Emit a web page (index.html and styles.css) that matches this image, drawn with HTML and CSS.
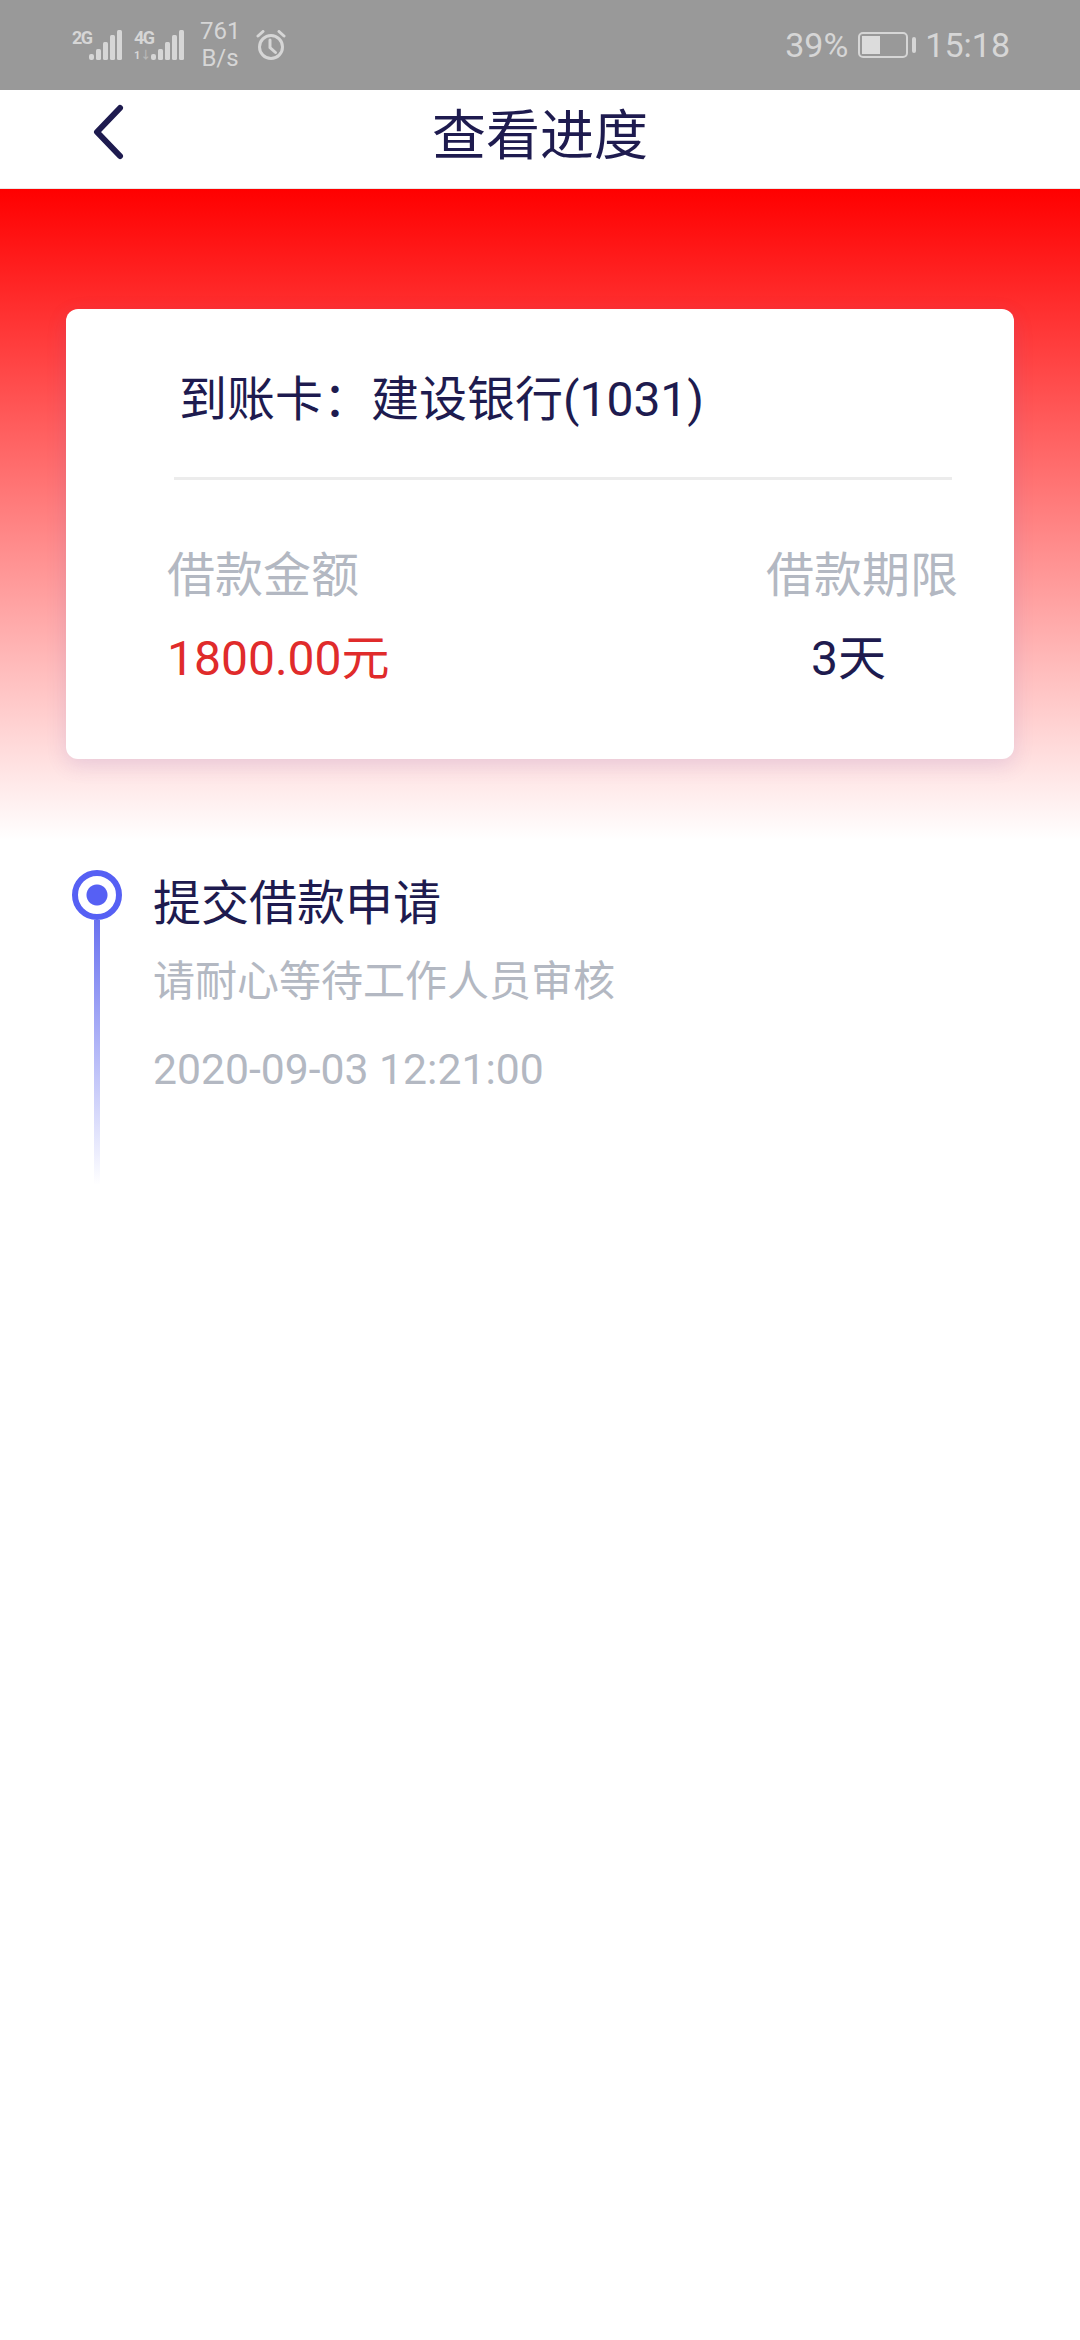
FILE: index.html
```html
<!DOCTYPE html>
<html lang="zh">
<head>
    <meta charset="utf-8">
    <title>查看进度</title>
    <link rel="stylesheet" href="styles.css">
</head>
<body>
    <header class="status-bar">
        <div class="status-left">
            <div class="signal">
                <span class="net-label">2G</span>
                <svg class="bars" width="33" height="30" viewBox="0 0 33 30"><g fill="#d6d6d6"><rect x="0" y="24" width="5" height="6" rx="2"/><rect x="7" y="19" width="5" height="11" rx="1.5"/><rect x="14" y="12" width="5" height="18" rx="1.5"/><rect x="21" y="5" width="5" height="25" rx="1.5"/><rect x="28" y="0" width="5" height="30" rx="1.5"/></g></svg>
            </div>
            <div class="signal">
                <span class="net-label">4G<small>1<i>↓</i></small></span>
                <svg class="bars" width="33" height="30" viewBox="0 0 33 30"><g fill="#d6d6d6"><rect x="0" y="24" width="5" height="6" rx="2"/><rect x="7" y="19" width="5" height="11" rx="1.5"/><rect x="14" y="12" width="5" height="18" rx="1.5"/><rect x="21" y="5" width="5" height="25" rx="1.5"/><rect x="28" y="0" width="5" height="30" rx="1.5"/></g></svg>
            </div>
            <div class="speed">761<br>B/s</div>
            <svg class="alarm" width="30" height="30" viewBox="0 0 30 30" fill="none" stroke="#d6d6d6" stroke-width="3" stroke-linecap="round"><circle cx="15" cy="17" r="11.5"/><path d="M14 10v7.5l5.5 5"/><path d="M2 6l5-4.5M28 6l-5-4.5"/></svg>
        </div>
        <div class="status-right">
            <span>39%</span>
            <div class="battery"><div class="battery-level"></div></div>
            <div class="battery-tip"></div>
            <span>15:18</span>
        </div>
    </header>

    <nav class="nav-bar">
        <svg class="back" width="34" height="58" viewBox="0 0 34 58" fill="none" stroke="#1e1b4f" stroke-width="6" stroke-linecap="round" stroke-linejoin="round"><path d="M29 5L6 29l23 24"/></svg>
        <h1>查看进度</h1>
    </nav>

    <section class="banner">
        <div class="card">
            <div class="card-bank">到账卡：建设银行(1031)</div>
            <hr class="card-line">
            <div class="card-info">
                <div class="info-col">
                    <span class="info-label">借款金额</span>
                    <span class="info-money">1800.00元</span>
                </div>
                <div class="info-col info-col-center">
                    <span class="info-label">借款期限</span>
                    <span class="info-days">3天</span>
                </div>
            </div>
        </div>
    </section>

    <section class="progress">
        <div class="step">
            <div class="step-mark">
                <div class="step-dot"></div>
                <div class="step-line"></div>
            </div>
            <div class="step-text">
                <div class="step-title">提交借款申请</div>
                <div class="step-desc">请耐心等待工作人员审核</div>
                <div class="step-time">2020-09-03 12:21:00</div>
            </div>
        </div>
    </section>
</body>
</html>
```

FILE: styles.css
```css
* {
    box-sizing: border-box;
}

body {
    margin: 0;
    width: 1080px;
    height: 2340px;
    overflow: hidden;
    background-color: white;
    font-family: Roboto, "Noto Sans CJK SC", sans-serif;
    color: #1e1b4f;
}

.status-bar {
    display: flex;
    justify-content: space-between;
    align-items: center;
    height: 90px;
    padding: 0 70px 0 72px;
    background-color: #999999;
    color: #d6d6d6;
}

.status-left {
    display: flex;
    align-items: center;
}

.signal {
    display: flex;
    align-items: flex-end;
    margin-right: 12px;
}

.signal:nth-child(2) {
    margin-right: 16px;
}

.net-label {
    display: flex;
    flex-direction: column;
    width: 17px;
    height: 30px;
    font-size: 18px;
    font-weight: 700;
    line-height: 16px;
    letter-spacing: -1.5px;
}

.net-label small {
    margin-top: 5px;
    font-size: 11px;
    line-height: 9px;
    letter-spacing: 0;
}

.net-label i {
    font-style: normal;
    opacity: 0.5;
}

.speed {
    width: 40px;
    font-size: 24px;
    line-height: 27px;
    text-align: center;
}

.alarm {
    margin-left: 16px;
}

.status-right {
    display: flex;
    align-items: center;
    font-size: 34px;
}

.battery {
    width: 50px;
    height: 26px;
    margin-left: 10px;
    padding: 2px;
    border: 2px solid #d6d6d6;
    border-radius: 5px;
}

.battery-level {
    width: 18px;
    height: 100%;
    background-color: #dcdcdc;
}

.battery-tip {
    width: 4px;
    height: 16px;
    margin: 0 9px 0 4px;
    background-color: #d6d6d6;
    border-radius: 2px;
}

.nav-bar {
    display: flex;
    justify-content: center;
    align-items: center;
    position: relative;
    height: 99px;
    background-color: white;
    border-bottom: 1px solid #e8e8e8;
}

.nav-bar h1 {
    margin: -4px 0 0;
    font-size: 54px;
    font-weight: 400;
    line-height: 86px;
}

.back {
    position: absolute;
    left: 91px;
    top: 13px;
}

.banner {
    height: 651px;
    padding: 120px 66px 0;
    background: linear-gradient(#ff0000, #ffffff);
}

.card {
    height: 450px;
    padding: 57px 56px 0 101px;
    background-color: white;
    border-radius: 12px;
    box-shadow: 0 6px 20px rgba(110, 80, 180, 0.16);
}

.card-bank {
    padding-left: 12px;
    font-size: 48px;
    line-height: 68px;
}

.card-line {
    height: 3px;
    margin: 43px 6px 0 7px;
    border: 0;
    background-color: #ececec;
}

.card-info {
    display: flex;
    justify-content: space-between;
    margin-top: 62px;
}

.info-col {
    display: flex;
    flex-direction: column;
}

.info-col-center {
    align-items: center;
}

.info-label {
    font-size: 48px;
    line-height: 68px;
    color: #b3b8c2;
}

.info-money {
    margin-top: 15px;
    font-size: 48px;
    line-height: 68px;
    color: #e02b2b;
}

.info-days {
    margin: 15px 27px 0 0;
    font-size: 48px;
    line-height: 68px;
}

.progress {
    padding: 30px 72px 0;
}

.step {
    display: flex;
}

.step-mark {
    display: flex;
    flex-direction: column;
    align-items: center;
    width: 50px;
    margin-right: 31px;
}

.step-dot {
    flex: none;
    width: 50px;
    height: 50px;
    border: 6px solid #5660f4;
    border-radius: 50%;
    background: radial-gradient(circle, #5660f4 0 10px, white 11px);
}

.step-line {
    width: 6px;
    height: 265px;
    background: linear-gradient(#6a72f0, rgba(106, 114, 240, 0));
}

.step-title {
    font-size: 48px;
    line-height: 68px;
}

.step-desc {
    margin-top: 14px;
    font-size: 42px;
    line-height: 60px;
    color: #b3b8c2;
}

.step-time {
    margin-top: 27px;
    font-size: 42.7px;
    line-height: 60px;
    color: #b3b8c2;
}
```
